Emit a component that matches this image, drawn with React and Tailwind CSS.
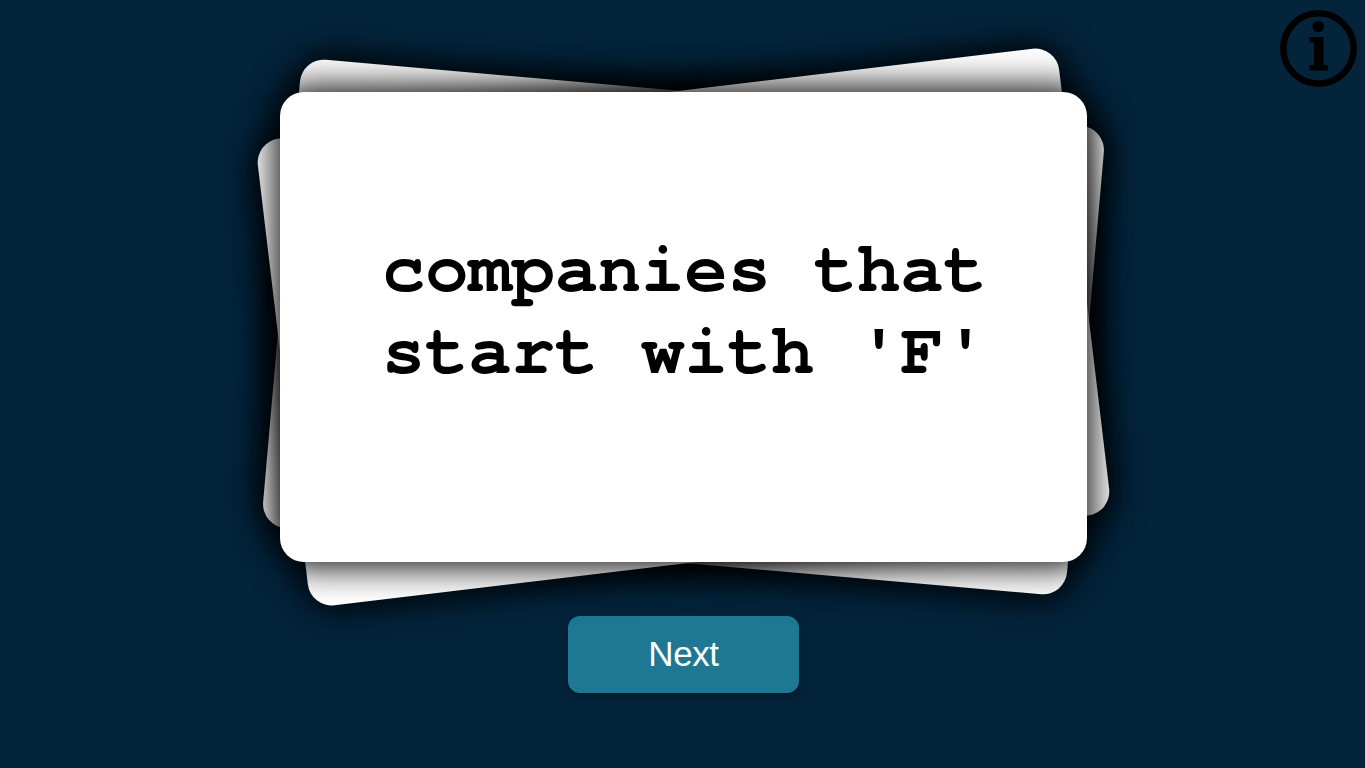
export default function App() {
  return (
    <div className="relative h-screen w-full overflow-hidden bg-[#04243c] pl-[2px] flex flex-col items-center pt-[92px]">
      <div className="relative w-[807px] h-[470px]">
        <div className="absolute inset-0 rounded-3xl bg-white rotate-[5deg] shadow-[0_0_36px_4px_#000]" />
        <div className="absolute inset-0 rounded-3xl bg-white -rotate-[6.8deg] shadow-[0_0_36px_4px_#000]" />
        <div className="absolute inset-0 rounded-3xl bg-white shadow-[0_0_36px_4px_#000] flex items-center justify-center">
          <p className="mb-[46px] ml-[2px] w-[606px] font-['TeX_Gyre_Cursor','Liberation_Mono',monospace] font-bold text-[72px] leading-[82px] text-black text-center">
            companies that start with 'F'
          </p>
        </div>
      </div>
      <button className="mt-[54px] w-[231px] h-[77px] rounded-xl bg-[#1e7893] text-white text-[35px] tracking-[-0.4px] font-['Liberation_Sans',sans-serif] shadow-[0_4px_12px_rgba(0,0,0,0.3)]">
        Next
      </button>
      <svg className="absolute left-[1280px] top-[10px] w-[77px] h-[77px]" viewBox="0 0 77 77" fill="none">
        <circle cx="38.5" cy="38.5" r="35.2" stroke="#000" strokeWidth="6.5" />
        <circle cx="38.3" cy="16.5" r="5.8" fill="#000" />
        <path d="M29.5 27H43.5V55H48V60.5H29.5V55H34V32.5H29.5Z" fill="#000" />
      </svg>
    </div>
  );
}
